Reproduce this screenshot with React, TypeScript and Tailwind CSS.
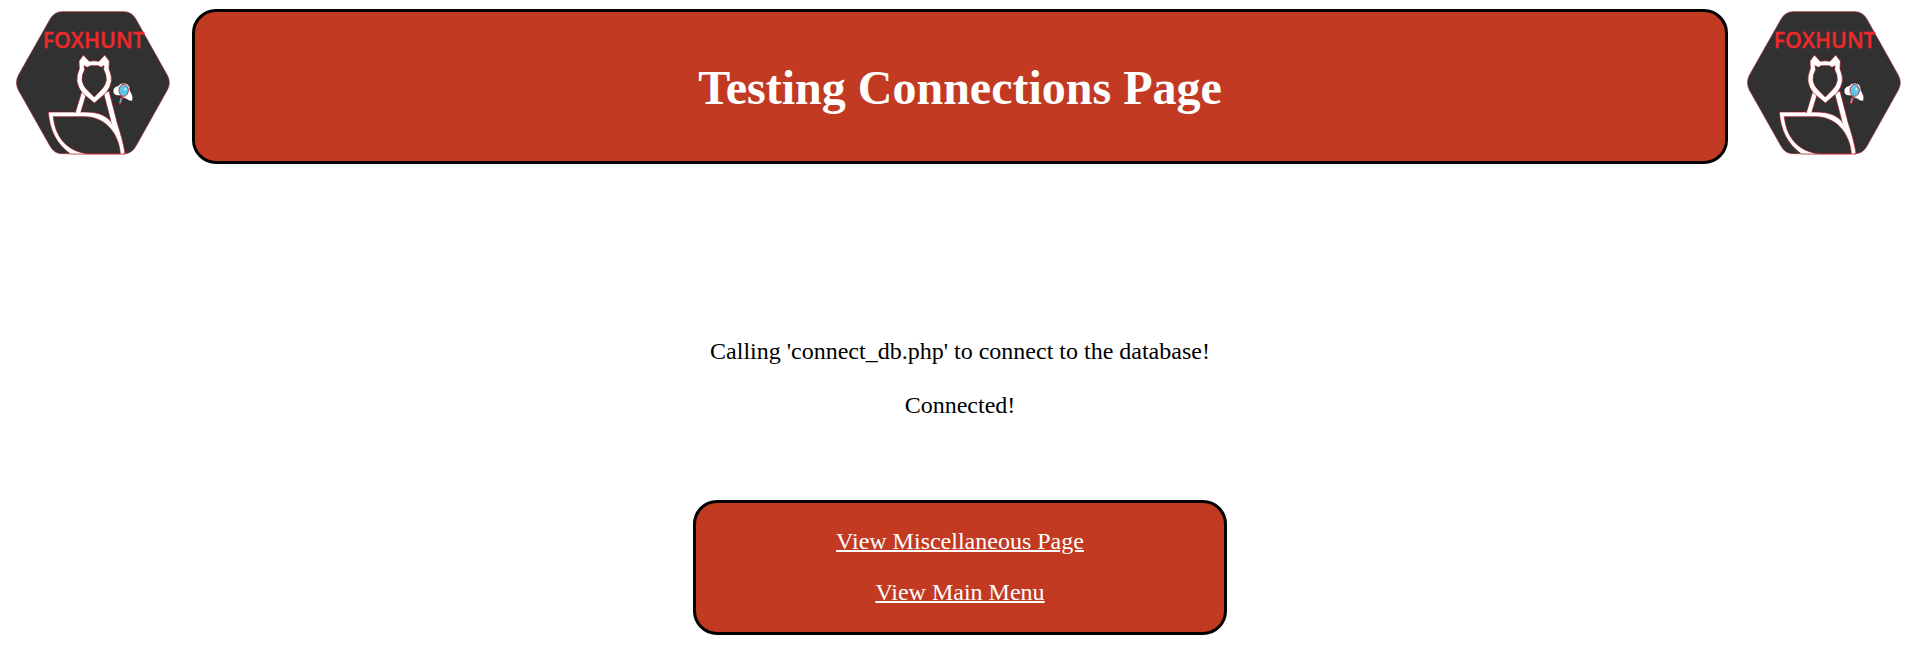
function FoxhuntLogo() {
  return (
    <svg viewBox="48 33 462 432" className="h-36 w-[154px] shrink-0" role="img" aria-label="Foxhunt logo">
      <path
        d="M186 35H372Q396 35 408 58L502 226Q514 248 502 270L408 438Q396 461 372 461H186Q162 461 150 438L55 270Q44 248 55 226L150 58Q162 35 186 35Z"
        fill="#313131"
        stroke="#a02a30"
        strokeWidth="2"
      />
      <text x="281" y="145" textAnchor="middle" fontSize="64" fill="#ec2a2c" stroke="#ec2a2c" strokeWidth="1" className="font-['Open_Sans',sans-serif] font-semibold">
        FOXHUNT
      </text>
      <path
        d="M145 336H254C300 336 322 350 336 368L354 382Q370 425 375 462H211C168 430 149 390 145 336Z"
        fill="#fff"
        stroke="#a8141c"
        strokeWidth="2"
      />
      <path d="M246 272L260 279L242 338H226ZM311 280L327 273L352 370Q370 425 375 461H361Q354 395 333 365Z" fill="#fff" stroke="#a8141c" strokeWidth="2" />
      <path d="M228 335H242V345H228ZM334 364L347 360L352 384L368 461H361L340 390Z" fill="#fff" />
      <path
        d="M160 350H254C316 350 356 400 361 461H262C202 454 166 412 160 350Z"
        fill="#313131"
        stroke="#a8141c"
        strokeWidth="2"
      />
      <path
        d="M250 165L268 184Q282 181 297 184L314 165L328 183L327 206Q336 228 334 244Q331 263 318 279L283 309L247 279Q234 263 231 244Q229 228 238 206L237 183Z"
        fill="#fff"
        stroke="#a8141c"
        strokeWidth="2"
      />
      <path
        d="M252 197L262 202L271 197H295L303 202L312 197L311 209Q319 222 319 240Q316 258 303 270L283 291L262 270Q249 258 246 240Q246 222 254 209Z"
        fill="#313131"
        stroke="#a8141c"
        strokeWidth="2"
      />
      <path
        d="M355 257Q360 248 373 249Q386 250 389 262Q388 271 394 278Q402 291 397 304Q386 304 379 297Q367 294 362 287Q344 290 339 277Q337 260 355 257Z"
        fill="#fff"
        stroke="#171717"
        strokeWidth="2"
      />
      <path d="M366 290L359 313" stroke="#b52b32" strokeWidth="8" />
      <path d="M364 295L360 308" stroke="#55c8eb" strokeWidth="4" />
      <ellipse cx="371" cy="271" rx="14" ry="18" fill="#55c8eb" stroke="#c8343b" strokeWidth="3" />
      <circle cx="376" cy="268" r="3" fill="#fff" />
    </svg>
  );
}

export default function App() {
  return (
    <div className="bg-white font-['Liberation_Serif',serif] text-2xl text-black">
      <header className="grid grid-cols-[192px_1fr_188px] items-start pt-[9px]">
        <div className="pt-0.5 pl-4">
          <FoxhuntLogo />
        </div>
        <div className="flex items-center justify-center rounded-3xl border-3 border-black bg-[#c23a22] px-6 pt-[49px] pb-[47px]">
          <h1 className="text-center text-5xl leading-[53px] font-bold text-white">Testing Connections Page</h1>
        </div>
        <div className="pt-0.5 pl-[19px]">
          <FoxhuntLogo />
        </div>
      </header>
      <main className="flex flex-col items-center pt-[172px] pb-3 pl-1 text-center">
        <p className="leading-[30px]">Calling 'connect_db.php' to connect to the database!</p>
        <p className="mt-6 leading-[30px]">Connected!</p>
        <nav className="mt-20 flex w-[534px] max-w-full flex-col items-center gap-[23px] rounded-3xl border-3 border-black bg-[#c23a22] pt-6 pb-[26px] leading-7 text-white">
          <a href="#misc" className="underline decoration-2">View Miscellaneous Page</a>
          <a href="#menu" className="underline decoration-2">View Main Menu</a>
        </nav>
      </main>
    </div>
  );
}
